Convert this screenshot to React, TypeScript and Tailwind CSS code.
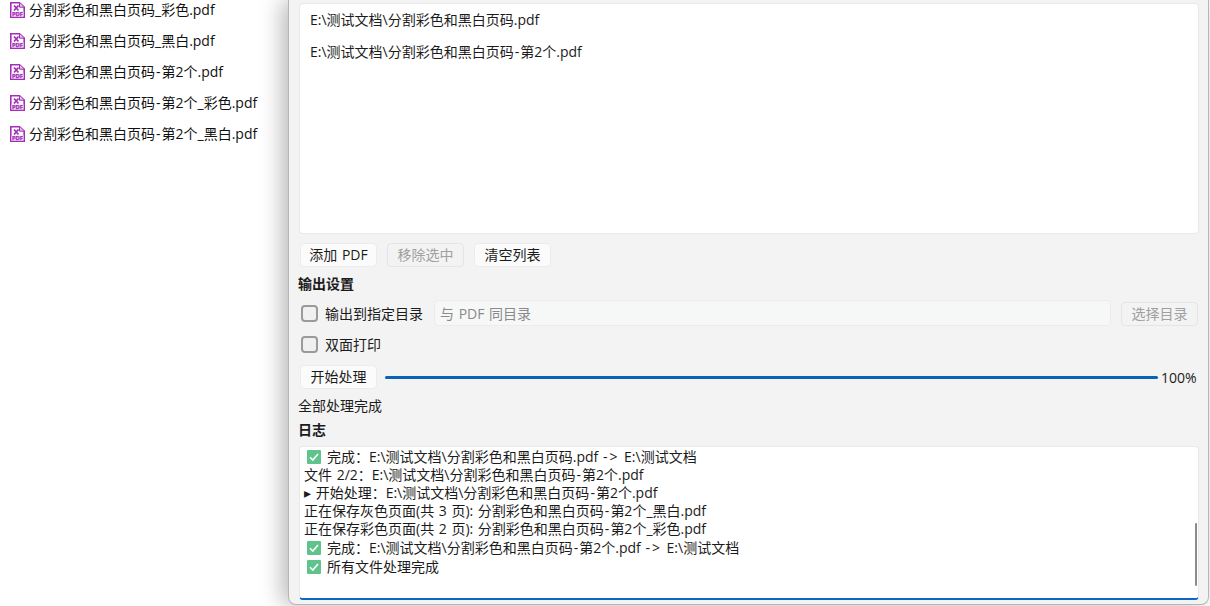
import React from 'react'

const font = "font-['Open_Sans','Noto_Sans_CJK_SC',sans-serif]"

const files = [
  '分割彩色和黑白页码_彩色.pdf',
  '分割彩色和黑白页码_黑白.pdf',
  '分割彩色和黑白页码-第2个.pdf',
  '分割彩色和黑白页码-第2个_彩色.pdf',
  '分割彩色和黑白页码-第2个_黑白.pdf',
]

// hyphen and arrow run a bit wider in the reference font
const Wide = ({ text }: { text: string }) => (
  <>
    {text.split(/(->|-)/).map((part, i) =>
      part === '->' ? (
        <span key={i} className="tracking-[2px]">{part}</span>
      ) : part === '-' ? (
        <span key={i} className="px-[1px]">{part}</span>
      ) : (
        part
      ),
    )}
  </>
)

const PdfIcon = () => (
  <svg width="16" height="16" viewBox="0 0 16 16" className="shrink-0">
    <path d="M.8 .8H9.5L14.2 5.2V15.2H.8Z" fill="#fff" stroke="#a32fb8" strokeWidth="1.6" />
    <path d="M9.5 .8V5.2H14.2" fill="#e6c2ec" stroke="#a32fb8" />
    <path d="M4 3.5L8.5 8.5M8.5 3.5L4 8.5" stroke="#a32fb8" strokeWidth="1.8" fill="none" />
    <rect x="1.5" y="9.5" width="12" height="5" fill="#f1dcf4" />
    <text x="7.5" y="14.3" textAnchor="middle" fontSize="5.8" fontWeight="700" fill="#a32fb8" stroke="#a32fb8" strokeWidth="0.25">PDF</text>
  </svg>
)

const CheckIcon = () => (
  <svg width="14" height="14" viewBox="0 0 14 14" className="shrink-0">
    <rect width="14" height="14" rx="1" fill="#5fc48c" />
    <path d="M3 7.2L5.8 10L11 4" stroke="#fff" strokeWidth="1.6" fill="none" />
  </svg>
)

const Btn = ({ children, disabled }: { children: React.ReactNode; disabled?: boolean }) => (
  <button
    className={
      disabled
        ? 'h-6 w-[77px] shrink-0 rounded-[4px] border border-[#e5e5e5] bg-[#f3f3f3] text-[14px] leading-none text-[#a0a0a0]'
        : 'h-6 w-[77px] shrink-0 rounded-[4px] border border-[#ececec] bg-[#fbfbfb] text-[14px] leading-none text-[#1b1b1b] [word-spacing:1px]'
    }
  >
    {children}
  </button>
)

const Check = ({ label }: { label: string }) => (
  <div className="flex items-center">
    <span className="ml-[3px] h-[17px] w-[17px] shrink-0 rounded-[4px] border-2 border-[#9a9a9a] bg-[#f0f0f0]" />
    <span className="ml-[7px] text-[14px] text-[#1b1b1b]">{label}</span>
  </div>
)

export default function App() {
  return (
    <div className={`flex h-[606px] w-[1210px] overflow-hidden bg-white ${font}`}>
      <div className="w-[288px] shrink-0 pl-[10px]">
        <div className="-mt-[6px] flex flex-col">
          {files.map((f) => (
            <div key={f} className="flex h-[31.1px] items-center gap-[3px] text-[14px] text-[#111]">
              <PdfIcon />
              <span><Wide text={f} /></span>
            </div>
          ))}
        </div>
      </div>

      <div className="mb-[1px] mr-[1px] flex w-[921px] flex-col rounded-b-[8px] border border-t-0 border-[#b5b5b5] bg-[#f3f3f3] pl-[10px] pr-[9px] pt-[3px] shadow-[-6px_0_22px_rgba(0,0,0,0.28)]">
        <div className="flex h-[231px] flex-col gap-[12px] rounded-[4px] border border-[#e8e8e8] bg-white pl-[10px] pt-[6px] text-[14px] leading-[20px] text-[#1b1b1b]">
          <div>E:\测试文档\分割彩色和黑白页码.pdf</div>
          <div><Wide text="E:\测试文档\分割彩色和黑白页码-第2个.pdf" /></div>
        </div>

        <div className="mt-[9px] flex gap-[10px] pl-[1px]">
          <Btn>添加 PDF</Btn>
          <Btn disabled>移除选中</Btn>
          <Btn>清空列表</Btn>
        </div>

        <div className="-ml-[1px] mt-[7px] text-[14px] font-bold leading-[20px] text-[#1b1b1b]">输出设置</div>

        <div className="-ml-[1px] mt-[6px] flex h-[26px] items-center">
          <Check label="输出到指定目录" />
          <div className="ml-[11px] flex h-[26px] w-[677px] items-center rounded-[4px] border border-[#ececec] bg-[#f6f7f7] pl-[5px] text-[14px] text-[#8a8a8a] [word-spacing:1px]">
            与 PDF 同目录
          </div>
          <div className="ml-[9px] translate-x-[1px]">
            <Btn disabled>选择目录</Btn>
          </div>
        </div>

        <div className="-ml-[1px] mt-[8px] flex h-[20px] items-center">
          <Check label="双面打印" />
        </div>

        <div className="mt-[11px] flex h-6 items-center pl-[1px]">
          <Btn>开始处理</Btn>
          <div className="ml-[8px] h-[3px] w-[773px] rounded-full bg-[#0a62b8]" />
          <span className="ml-[3px] text-[14px] text-[#1b1b1b]">100%</span>
        </div>

        <div className="-ml-[1px] mt-[7px] text-[14px] leading-[20px] text-[#1b1b1b]">全部处理完成</div>
        <div className="-ml-[1px] mt-[4px] text-[14px] font-bold leading-[20px] text-[#1b1b1b]">日志</div>

        <div className="relative mt-[6px] h-[154px] rounded-[4px] border border-b-2 border-[#e8e8e8] border-b-[#0a67c4] bg-white pl-[4px] text-[14px] leading-[18px] text-[#1b1b1b] [word-spacing:1px]">
          <div className="flex h-[19px] items-center pl-[3px]"><CheckIcon /><span className="ml-[6px]"><Wide text="完成：E:\测试文档\分割彩色和黑白页码.pdf -> E:\测试文档" /></span></div>
          <div><Wide text="文件 2/2：E:\测试文档\分割彩色和黑白页码-第2个.pdf" /></div>
          <div><Wide text="▸ 开始处理：E:\测试文档\分割彩色和黑白页码-第2个.pdf" /></div>
          <div><Wide text="正在保存灰色页面(共 3 页): 分割彩色和黑白页码-第2个_黑白.pdf" /></div>
          <div><Wide text="正在保存彩色页面(共 2 页): 分割彩色和黑白页码-第2个_彩色.pdf" /></div>
          <div className="flex h-[19px] items-center pl-[3px]"><CheckIcon /><span className="ml-[6px]"><Wide text="完成：E:\测试文档\分割彩色和黑白页码-第2个.pdf -> E:\测试文档" /></span></div>
          <div className="flex h-[19px] items-center pl-[3px]"><CheckIcon /><span className="ml-[6px]">所有文件处理完成</span></div>
          <div className="absolute right-[1px] top-[76px] h-[63px] w-[2px] rounded-full bg-[#8a8a8a]" />
        </div>
      </div>
    </div>
  )
}
